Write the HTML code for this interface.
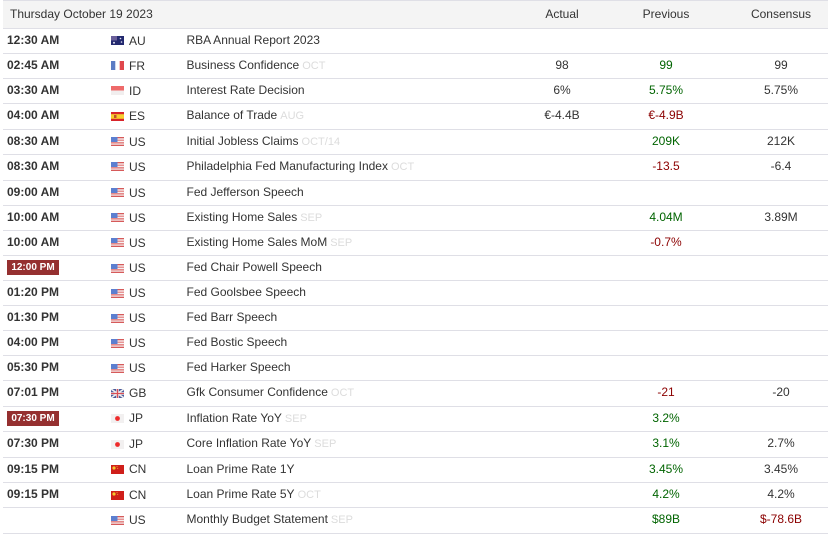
<!DOCTYPE html>
<html><head><meta charset="utf-8">
<style>
html,body{margin:0;padding:0;background:#fff;width:828px;height:534px;overflow:hidden}
body{font-family:"Liberation Sans",sans-serif;font-size:12px;color:#333;position:relative}
.h{position:absolute;left:3px;top:1px;width:825px;height:27px;background:#f4f4f4}
.l{position:absolute;left:3px;width:825px;height:1px;background:#dfdfe6}
.t{position:absolute;line-height:14px;white-space:nowrap}
.b{font-weight:bold;left:7px;color:#333}
.c{left:129px}
.e{left:186.5px}
.e i{font-style:normal;font-size:11px;color:#dcdcdc;margin-left:3px}
.n{width:100px;text-align:center}
.a{left:512px}.p{left:616px}.s{left:731px}
.g{color:#006400}.r{color:#8b0000}
.tag{position:absolute;left:7px;width:52px;height:15px;background:#953030;color:#fff;font-weight:bold;font-size:10px;line-height:15px;text-align:center}
svg{position:absolute;left:111px;width:13px;height:9px;filter:blur(.35px)}
</style></head><body>
<svg width="0" height="0" style="position:absolute;left:0;top:0"><defs>
<g id="US"><rect width="13" height="9" fill="#f6f0f0"/><rect y="0" width="13" height="1.3" fill="#d65a5a"/><rect y="2.6" width="13" height="1.3" fill="#e58a8a"/><rect y="5.2" width="13" height="1.3" fill="#e07070"/><rect y="7.7" width="13" height="1.3" fill="#d65a5a"/><rect width="6.5" height="5" fill="#5c7fd0"/></g>
<g id="AU"><rect width="13" height="9" fill="#23296f"/><rect width="6" height="4.5" fill="#6a5f9a"/><circle cx="9.5" cy="2.5" r=".8" fill="#dfe0f0"/><circle cx="10.5" cy="6" r=".8" fill="#dfe0f0"/><circle cx="3" cy="6.8" r="1" fill="#dfe0f0"/></g>
<g id="FR"><rect width="13" height="9" fill="#fff"/><rect width="4.3" height="9" fill="#5b7cc4"/><rect x="8.7" width="4.3" height="9" fill="#e0474c"/></g>
<g id="ID"><rect width="13" height="9" fill="#f1eeee"/><rect width="13" height="4.5" fill="#ee6a6a"/></g>
<g id="ES"><rect width="13" height="9" fill="#d8242a"/><rect y="2.2" width="13" height="4.6" fill="#f7cf2e"/><rect x="3" y="3" width="2.5" height="3" fill="#c0502a"/></g>
<g id="GB"><rect width="13" height="9" fill="#4a5a9a"/><path d="M0 0L13 9M13 0L0 9" stroke="#eee" stroke-width="1.6"/><path d="M6.5 0V9M0 4.5H13" stroke="#f2f2f2" stroke-width="2.6"/><path d="M6.5 0V9M0 4.5H13" stroke="#d94f55" stroke-width="1.3"/></g>
<g id="JP"><rect width="13" height="9" fill="#f2f0f0"/><circle cx="6.5" cy="4.5" r="2.4" fill="#ee2a2a"/></g>
<g id="CN"><rect width="13" height="9" fill="#cf1f1a"/><circle cx="3" cy="3" r="1.6" fill="#f5c82e"/><circle cx="6" cy="1.6" r=".5" fill="#f5c82e"/><circle cx="6.7" cy="3.4" r=".5" fill="#f5c82e"/></g>
</defs></svg>

<div class="l" style="top:0"></div>
<div class="h"></div>
<div class="t" style="left:10px;top:7px">Thursday October 19 2023</div>
<div class="t n a" style="top:7px">Actual</div>
<div class="t n p" style="top:7px">Previous</div>
<div class="t n s" style="top:7px">Consensus</div>

<div class="l" style="top:28px"></div>
<div class="t b" style="top:33px">12:30 AM</div><svg style="top:36px"><use href="#AU"/></svg><div class="t c" style="top:34px">AU</div><div class="t e" style="top:33px">RBA Annual Report 2023</div>

<div class="l" style="top:53px"></div>
<div class="t b" style="top:58px">02:45 AM</div><svg style="top:61px"><use href="#FR"/></svg><div class="t c" style="top:59px">FR</div><div class="t e" style="top:58px">Business Confidence<i>OCT</i></div><div class="t n a" style="top:58px">98</div><div class="t n p g" style="top:58px">99</div><div class="t n s" style="top:58px">99</div>

<div class="l" style="top:78px"></div>
<div class="t b" style="top:83px">03:30 AM</div><svg style="top:86px"><use href="#ID"/></svg><div class="t c" style="top:84px">ID</div><div class="t e" style="top:83px">Interest Rate Decision</div><div class="t n a" style="top:83px">6%</div><div class="t n p g" style="top:83px">5.75%</div><div class="t n s" style="top:83px">5.75%</div>

<div class="l" style="top:103px"></div>
<div class="t b" style="top:108px">04:00 AM</div><svg style="top:112px"><use href="#ES"/></svg><div class="t c" style="top:109px">ES</div><div class="t e" style="top:108px">Balance of Trade<i>AUG</i></div><div class="t n a" style="top:108px">€-4.4B</div><div class="t n p r" style="top:108px">€-4.9B</div>

<div class="l" style="top:129px"></div>
<div class="t b" style="top:134px">08:30 AM</div><svg style="top:137px"><use href="#US"/></svg><div class="t c" style="top:135px">US</div><div class="t e" style="top:134px">Initial Jobless Claims<i>OCT/14</i></div><div class="t n p g" style="top:134px">209K</div><div class="t n s" style="top:134px">212K</div>

<div class="l" style="top:154px"></div>
<div class="t b" style="top:159px">08:30 AM</div><svg style="top:162px"><use href="#US"/></svg><div class="t c" style="top:160px">US</div><div class="t e" style="top:159px">Philadelphia Fed Manufacturing Index<i>OCT</i></div><div class="t n p r" style="top:159px">-13.5</div><div class="t n s" style="top:159px">-6.4</div>

<div class="l" style="top:180px"></div>
<div class="t b" style="top:185px">09:00 AM</div><svg style="top:188px"><use href="#US"/></svg><div class="t c" style="top:186px">US</div><div class="t e" style="top:185px">Fed Jefferson Speech</div>

<div class="l" style="top:205px"></div>
<div class="t b" style="top:210px">10:00 AM</div><svg style="top:213px"><use href="#US"/></svg><div class="t c" style="top:211px">US</div><div class="t e" style="top:210px">Existing Home Sales<i>SEP</i></div><div class="t n p g" style="top:210px">4.04M</div><div class="t n s" style="top:210px">3.89M</div>

<div class="l" style="top:230px"></div>
<div class="t b" style="top:235px">10:00 AM</div><svg style="top:238px"><use href="#US"/></svg><div class="t c" style="top:236px">US</div><div class="t e" style="top:235px">Existing Home Sales MoM<i>SEP</i></div><div class="t n p r" style="top:235px">-0.7%</div>

<div class="l" style="top:255px"></div>
<div class="tag" style="top:260px">12:00 PM</div><svg style="top:264px"><use href="#US"/></svg><div class="t c" style="top:261px">US</div><div class="t e" style="top:260px">Fed Chair Powell Speech</div>

<div class="l" style="top:280px"></div>
<div class="t b" style="top:285px">01:20 PM</div><svg style="top:289px"><use href="#US"/></svg><div class="t c" style="top:286px">US</div><div class="t e" style="top:285px">Fed Goolsbee Speech</div>

<div class="l" style="top:305px"></div>
<div class="t b" style="top:310px">01:30 PM</div><svg style="top:314px"><use href="#US"/></svg><div class="t c" style="top:311px">US</div><div class="t e" style="top:310px">Fed Barr Speech</div>

<div class="l" style="top:330px"></div>
<div class="t b" style="top:335px">04:00 PM</div><svg style="top:339px"><use href="#US"/></svg><div class="t c" style="top:336px">US</div><div class="t e" style="top:335px">Fed Bostic Speech</div>

<div class="l" style="top:355px"></div>
<div class="t b" style="top:360px">05:30 PM</div><svg style="top:364px"><use href="#US"/></svg><div class="t c" style="top:361px">US</div><div class="t e" style="top:360px">Fed Harker Speech</div>

<div class="l" style="top:380px"></div>
<div class="t b" style="top:385px">07:01 PM</div><svg style="top:389px"><use href="#GB"/></svg><div class="t c" style="top:386px">GB</div><div class="t e" style="top:385px">Gfk Consumer Confidence<i>OCT</i></div><div class="t n p r" style="top:385px">-21</div><div class="t n s" style="top:385px">-20</div>

<div class="l" style="top:406px"></div>
<div class="tag" style="top:411px">07:30 PM</div><svg style="top:414px"><use href="#JP"/></svg><div class="t c" style="top:411px">JP</div><div class="t e" style="top:411px">Inflation Rate YoY<i>SEP</i></div><div class="t n p g" style="top:411px">3.2%</div>

<div class="l" style="top:431px"></div>
<div class="t b" style="top:436px">07:30 PM</div><svg style="top:440px"><use href="#JP"/></svg><div class="t c" style="top:437px">JP</div><div class="t e" style="top:436px">Core Inflation Rate YoY<i>SEP</i></div><div class="t n p g" style="top:436px">3.1%</div><div class="t n s" style="top:436px">2.7%</div>

<div class="l" style="top:457px"></div>
<div class="t b" style="top:462px">09:15 PM</div><svg style="top:465px"><use href="#CN"/></svg><div class="t c" style="top:462px">CN</div><div class="t e" style="top:462px">Loan Prime Rate 1Y</div><div class="t n p g" style="top:462px">3.45%</div><div class="t n s" style="top:462px">3.45%</div>

<div class="l" style="top:482px"></div>
<div class="t b" style="top:487px">09:15 PM</div><svg style="top:491px"><use href="#CN"/></svg><div class="t c" style="top:488px">CN</div><div class="t e" style="top:487px">Loan Prime Rate 5Y<i>OCT</i></div><div class="t n p g" style="top:487px">4.2%</div><div class="t n s" style="top:487px">4.2%</div>

<div class="l" style="top:507px"></div>
<svg style="top:516px"><use href="#US"/></svg><div class="t c" style="top:513px">US</div><div class="t e" style="top:512px">Monthly Budget Statement<i>SEP</i></div><div class="t n p g" style="top:512px">$89B</div><div class="t n s r" style="top:512px">$-78.6B</div>
<div class="l" style="top:533px"></div>
</body></html>
